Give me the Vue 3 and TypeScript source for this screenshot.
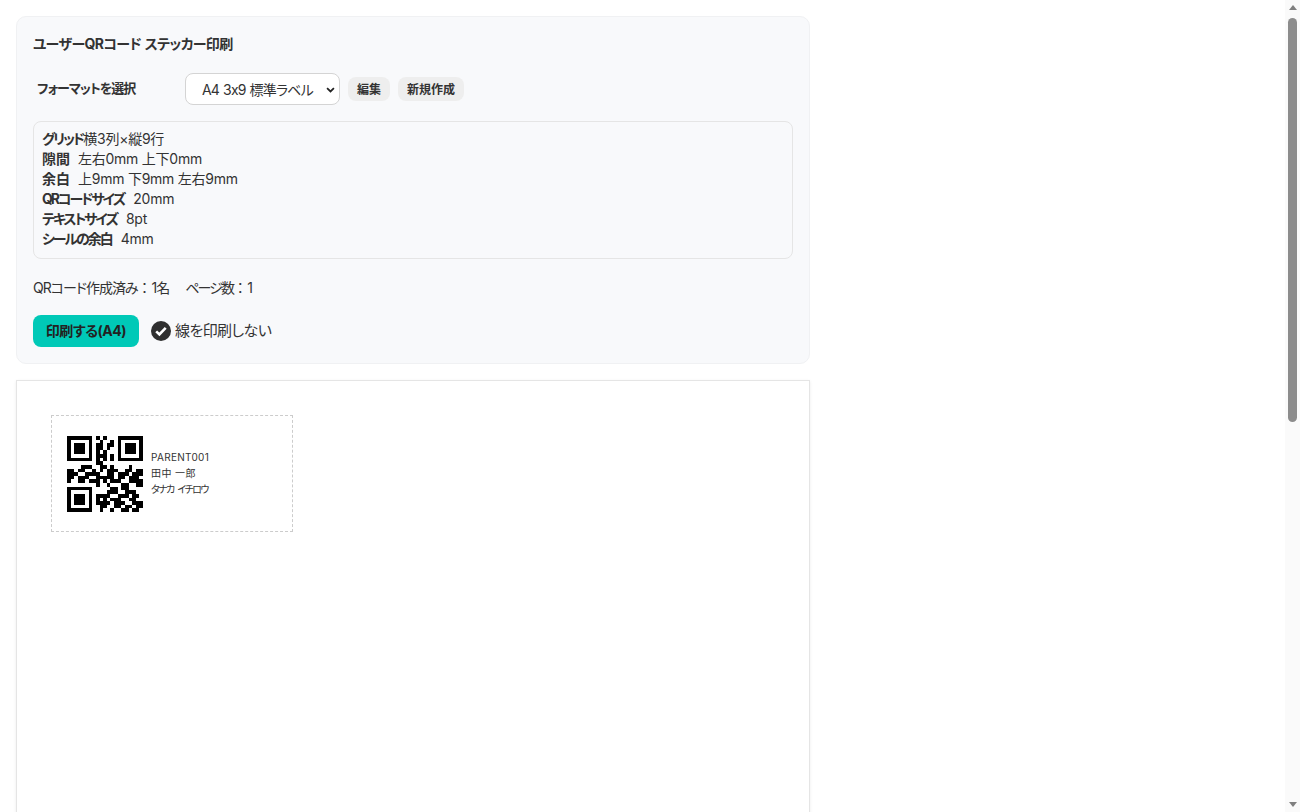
<script setup lang="ts">
const rows: string[] = [
  '111111101010001111111',
  '100000100100101000001',
  '101110101101101011101',
  '101110101101001011101',
  '101110101010001011101',
  '100000101110101000001',
  '111111101010101111111',
  '000000001100000000000',
  '000011100110100001000',
  '110110010101110011011',
  '111001111001101110111',
  '110111001111101101110',
  '100110111010111001111',
  '000000001001000110011',
  '111111100000110110000',
  '100000100001110011100',
  '101110101111001110110',
  '101110101010111001100',
  '101110101111011100111',
  '100000100110011011011',
  '111111100100100110110',
]
const qrPath = rows
  .map((r, y) =>
    r
      .split('')
      .map((c, x) => (c === '1' ? `M${x} ${y}h1v1h-1z` : ''))
      .join(''),
  )
  .join('')

const specs = [
  { k: '隙間', v: '左右0mm 上下0mm', tight: false },
  { k: '余白', v: '上9mm 下9mm 左右9mm', tight: false },
  { k: 'QRコードサイズ', v: '20mm', tight: true },
  { k: 'テキストサイズ', v: '8pt', tight: true },
  { k: 'シールの余白', v: '4mm', tight: true },
]
</script>

<template>
  <div class="viewport">
    <main class="main">
      <section class="card">
        <h1 class="title">ユーザーQRコード ステッカー印刷</h1>
        <div class="format-row">
          <label class="format-label">フォーマットを選択</label>
          <div class="select-wrap">
            <select class="format-select">
              <option>A4 3x9 標準ラベル</option>
            </select>
            <svg class="chevron" viewBox="0 0 10 7">
              <path d="M1 1.2l4 4 4-4" fill="none" stroke="#222" stroke-width="2" />
            </svg>
          </div>
          <button class="chip">編集</button>
          <button class="chip">新規作成</button>
        </div>
        <div class="info">
          <div><b class="tight">グリッド</b>横3列×縦9行</div>
          <div v-for="s in specs" :key="s.k">
            <b class="key" :class="{ tight: s.tight }">{{ s.k }}</b>{{ s.v }}
          </div>
        </div>
        <div class="status">
          <span class="made">QRコード作成済み<span class="colon">：</span>1名</span>
          <span class="pages">ページ数<span class="colon">：</span>1</span>
        </div>
        <div class="actions">
          <button class="print">印刷する(A4)</button>
          <label class="check">
            <svg class="check-icon" viewBox="0 0 20 20">
              <circle cx="10" cy="10" r="10" fill="#2f2f2f" />
              <path d="M5.2 10.4l3.2 3.1 6.3-6.6" fill="none" stroke="#fff" stroke-width="2.6" />
            </svg>
            <span class="check-text">線を印刷しない</span>
          </label>
        </div>
      </section>
      <section class="sheet">
        <div class="sticker">
          <svg class="qr" viewBox="0 0 21 21" shape-rendering="crispEdges">
            <path :d="qrPath" fill="#000" />
          </svg>
          <div class="sticker-text">
            <div class="code">PARENT001</div>
            <div class="name">田中 一郎</div>
            <div class="kana">タナカ イチロウ</div>
          </div>
        </div>
      </section>
    </main>
    <aside class="scrollbar">
      <span class="arrow up"></span>
      <div class="track"><div class="thumb"></div></div>
      <span class="arrow down"></span>
    </aside>
  </div>
</template>

<style>
html,
body {
  margin: 0;
  overflow: hidden;
  background: #fff;
}
</style>

<style scoped>
.viewport {
  display: flex;
  height: 812px;
  overflow: hidden;
  font-family: Inter, "Noto Sans CJK JP", sans-serif;
  font-feature-settings: "palt", "calt" 0;
  color: #333;
}
.main {
  flex: 1;
  padding: 16px;
  box-sizing: border-box;
  overflow: hidden;
}
.card {
  width: 794px;
  box-sizing: border-box;
  height: 348px;
  padding: 16px;
  background: #f8f9fb;
  border: 1px solid #f0f1f3;
  border-radius: 10px;
}
.title {
  margin: 0;
  font-size: 14px;
  line-height: 22px;
  font-weight: 700;
  letter-spacing: -0.65px;
  word-spacing: 1px;
  color: #333;
}
.format-row {
  display: flex;
  align-items: center;
  margin-top: 18px;
  gap: 8px;
}
.format-label {
  width: 140px;
  padding-left: 4px;
  font-size: 13px;
  font-weight: 700;
  line-height: 30px;
  margin-top: -2px;
  letter-spacing: -1px;
}
.select-wrap {
  position: relative;
  display: flex;
}
.format-select {
  appearance: none;
  width: 155px;
  height: 32px;
  padding: 0 0 0 16px;
  border: 1px solid #d4d4d4;
  border-radius: 8px;
  background: #fff;
  color: #333;
  font: inherit;
  font-size: 14px;
  letter-spacing: -0.85px;
  word-spacing: 1px;
}
.chevron {
  position: absolute;
  right: 5px;
  top: 14px;
  width: 9px;
  height: 6px;
  pointer-events: none;
}
.chip {
  height: 24px;
  padding: 0 9px 2px;
  border: 0;
  border-radius: 8px;
  background: #eeeeee;
  color: #333;
  font: inherit;
  font-size: 12px;
  font-weight: 700;
}
.info {
  margin-top: 16px;
  padding: 7px 8px;
  height: 138px;
  box-sizing: border-box;
  border: 1px solid #e5e5e5;
  border-radius: 8px;
  font-size: 14px;
  line-height: 20px;
  letter-spacing: -0.25px;
}
.info b {
  font-weight: 700;
  letter-spacing: 0;
}
.info b.tight {
  letter-spacing: -2.05px;
}
.key {
  margin-right: 8px;
}
.key.tight {
  margin-right: 9px;
}
.status {
  display: flex;
  gap: 16px;
  margin-top: 19px;
  font-size: 14px;
  line-height: 20px;
}
.made {
  letter-spacing: -1px;
}
.pages {
  letter-spacing: -1.9px;
}
.colon {
  font-feature-settings: "palt" 0;
  letter-spacing: 0;
}
.actions {
  display: flex;
  align-items: center;
  gap: 12px;
  margin-top: 17px;
}
.print {
  width: 106px;
  height: 32px;
  border: 0;
  border-radius: 8px;
  background: #00c9b7;
  color: #222;
  font: inherit;
  font-size: 14px;
  font-weight: 700;
  letter-spacing: -0.45px;
  padding: 0 0 3px;
}
.check {
  display: flex;
  align-items: center;
  gap: 4px;
  font-size: 15px;
  letter-spacing: -0.6px;
}
.check-text {
  padding-bottom: 3px;
}
.check-icon {
  width: 20px;
  height: 20px;
}
.sheet {
  width: 794px;
  height: 1123px;
  box-sizing: border-box;
  margin-top: 16px;
  padding: 34px;
  background: #fff;
  border: 1px solid #e5e5e5;
  box-shadow: 0 1px 3px rgba(0, 0, 0, 0.08);
}
.sticker {
  display: flex;
  align-items: center;
  gap: 8px;
  width: 242px;
  height: 117px;
  box-sizing: border-box;
  padding: 0 15px;
  border: 1px dashed #ccc;
}
.qr {
  width: 76px;
  height: 76px;
  flex: none;
}
.sticker-text {
  font-size: 10px;
  line-height: 16px;
  color: #333;
  margin-bottom: 2px;
}
.code {
  letter-spacing: 0.3px;
}
.name {
  letter-spacing: 0.4px;
}
.kana {
  letter-spacing: -1.6px;
  word-spacing: 2.5px;
}
.scrollbar {
  width: 15px;
  flex: none;
  background: #fafafa;
  display: flex;
  flex-direction: column;
  align-items: center;
}
.arrow {
  width: 0;
  height: 0;
  border-left: 4.5px solid transparent;
  border-right: 4.5px solid transparent;
  margin: 5px 0;
}
.up {
  border-bottom: 5px solid #7f7f7f;
}
.down {
  border-top: 5px solid #7f7f7f;
}
.track {
  flex: 1;
  width: 100%;
  display: flex;
  justify-content: center;
  padding-top: 3px;
}
.thumb {
  width: 9px;
  height: 404px;
  border-radius: 5px;
  background: #8c8c8c;
}
</style>
